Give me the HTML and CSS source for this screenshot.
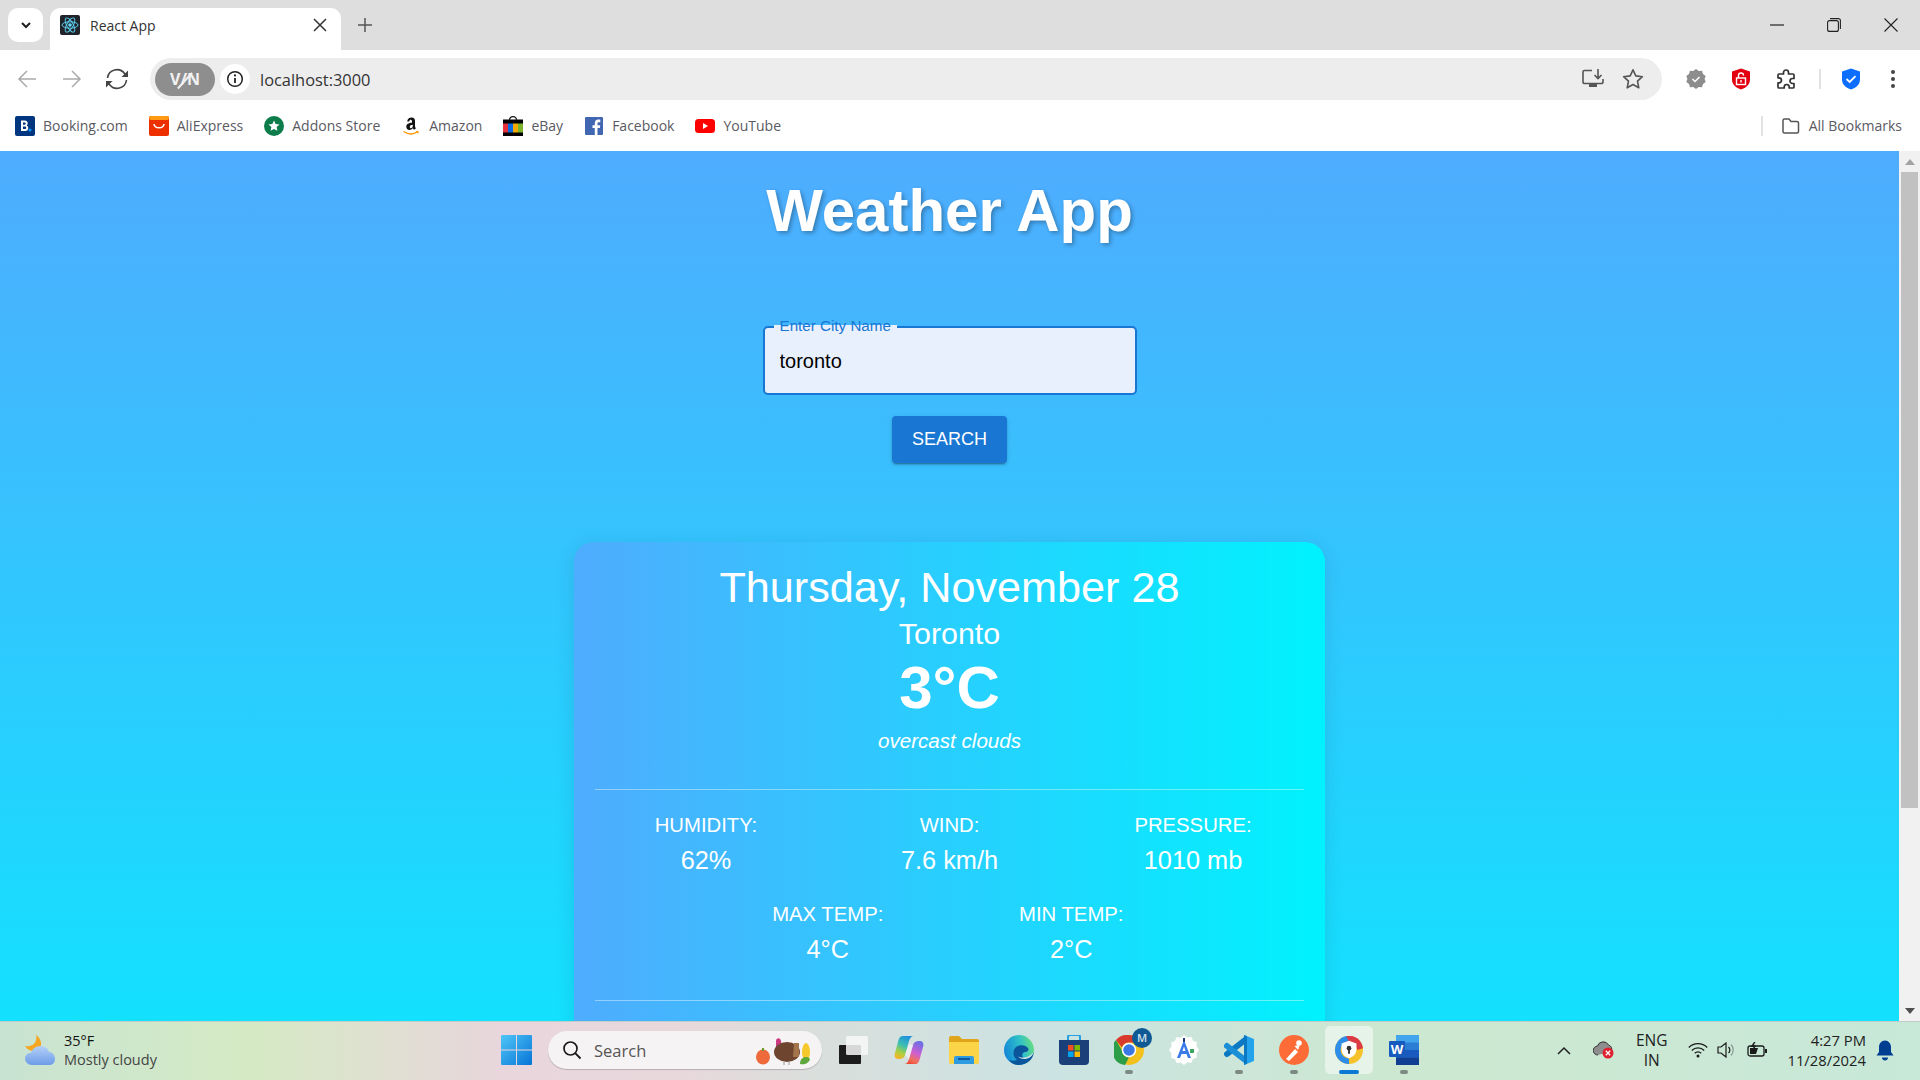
FILE: index.html
```html
<!DOCTYPE html>
<html lang="en">
<head>
  <meta charset="UTF-8">
  <title>React App</title>
  <link rel="stylesheet" href="styles.css">
</head>
<body>
  <!-- Tab strip -->
  <div class="tabstrip">
    <div class="tab-search">
      <svg width="14" height="14" viewBox="0 0 14 14"><path d="M3 5l4 4 4-4" fill="none" stroke="#1f1f1f" stroke-width="2"/></svg>
    </div>
    <div class="tab">
      <svg class="tab-icon" width="20" height="20" viewBox="0 0 20 20">
        <rect width="20" height="20" rx="2" fill="#20232a"/>
        <circle cx="10" cy="10" r="1.8" fill="#61dafb"/>
        <g fill="none" stroke="#61dafb" stroke-width="0.9">
          <ellipse cx="10" cy="10" rx="8" ry="3.2"/>
          <ellipse cx="10" cy="10" rx="8" ry="3.2" transform="rotate(60 10 10)"/>
          <ellipse cx="10" cy="10" rx="8" ry="3.2" transform="rotate(120 10 10)"/>
        </g>
      </svg>
      <span class="tab-title">React App</span>
      <svg width="14" height="14" viewBox="0 0 14 14"><path d="M1 1l12 12M13 1L1 13" stroke="#333" stroke-width="1.5"/></svg>
    </div>
    <div class="new-tab">
      <svg width="14" height="14" viewBox="0 0 14 14"><path d="M7 0v14M0 7h14" stroke="#555" stroke-width="1.5"/></svg>
    </div>
    <div class="window-controls">
      <svg width="14" height="14" viewBox="0 0 14 14"><path d="M0 7h14" stroke="#222" stroke-width="1.2"/></svg>
      <svg width="14" height="14" viewBox="0 0 14 14"><rect x="0.6" y="2.6" width="10.8" height="10.8" rx="2" fill="none" stroke="#222" stroke-width="1.1"/><path d="M3 .6h8.4a2 2 0 0 1 2 2V11" fill="none" stroke="#222" stroke-width="1.1"/></svg>
      <svg width="14" height="14" viewBox="0 0 14 14"><path d="M.5.5l13 13M13.5.5l-13 13" stroke="#222" stroke-width="1.1"/></svg>
    </div>
  </div>

  <!-- Toolbar -->
  <div class="toolbar">
    <div class="nav-buttons">
      <svg width="20" height="20" viewBox="0 0 20 20"><path d="M19 10H2M10 2l-8 8 8 8" fill="none" stroke="#aaa" stroke-width="1.5"/></svg>
      <svg width="20" height="20" viewBox="0 0 20 20"><path d="M1 10h17M10 2l8 8-8 8" fill="none" stroke="#aaa" stroke-width="1.5"/></svg>
      <svg class="reload" width="24" height="24" viewBox="0 0 24 24"><g fill="none" stroke="#444" stroke-width="1.6"><path d="M2.5 11a9.5 9.5 0 0 1 17-4.500L21.500 9"/><path d="M21.5 13a9.5 9.5 0 0 1-17 4.500L2.500 15"/></g><path d="M23 3.5V10h-6.500zM1 20.500V14h6.500z" fill="#444"/></svg>
    </div>
    <div class="omnibox">
      <div class="vpn-pill"><span class="vpn-text">V/N</span></div>
      <div class="site-info">
        <svg width="18" height="18" viewBox="0 0 18 18"><circle cx="9" cy="9" r="7.3" fill="none" stroke="#222" stroke-width="1.5"/><path d="M9 8v5" stroke="#222" stroke-width="1.8"/><circle cx="9" cy="5.4" r="1.1" fill="#222"/></svg>
      </div>
      <span class="url">localhost:3000</span>
      <div class="omnibox-actions">
        <svg width="22" height="22" viewBox="0 0 22 22"><g fill="none" stroke="#555" stroke-width="1.6"><path d="M10 2.5H2.500A1.500 1.500 0 0 0 1 4v10a1.500 1.500 0 0 0 1.500 1.500h17A1.500 1.500 0 0 0 21 14v-3"/><path d="M16 1v9M12.500 7l3.500 3.500L19.500 7"/></g><path d="M7 16h8v3H7z" fill="#555"/></svg>
        <svg width="22" height="22" viewBox="0 0 22 22"><path d="M11 1.800l2.800 6.100 6.600.8-4.900 4.500 1.300 6.600-5.800-3.300-5.800 3.300 1.300-6.600L1.600 8.700l6.600-.8z" fill="none" stroke="#555" stroke-width="1.6" stroke-linejoin="round"/></svg>
      </div>
    </div>
    <div class="extensions">
      <svg class="ext-a" width="22" height="22" viewBox="0 0 22 22"><path d="M11 1l2.700 1.900 3.300-.2 1 3.200 2.700 2-1.100 3.100 1.100 3.100-2.700 2-1 3.200-3.300-.2L11 21l-2.700-1.900-3.300.2-1-3.200-2.700-2L2.400 11 1.300 7.900l2.700-2 1-3.200 3.300.2z" fill="#8d8d8d"/><path d="M7.5 11l2.500 2.500 4.500-4.500" fill="none" stroke="#fff" stroke-width="1.5"/></svg>
      <svg class="ext-b" width="20" height="22" viewBox="0 0 20 22"><path d="M10 .5l9 3v8c0 5-4 8.500-9 10-5-1.500-9-5-9-10v-8z" fill="#e3000f"/><rect x="5.5" y="10" width="9" height="6.5" fill="none" stroke="#fff" stroke-width="1.4"/><path d="M7.5 10V7.500a2.500 2.500 0 0 1 5 0" fill="none" stroke="#fff" stroke-width="1.4"/><path d="M10 12v2.500" stroke="#fff" stroke-width="1.4"/></svg>
      <svg class="ext-c" width="22" height="22" viewBox="0 0 22 22"><path d="M8.5 4.500a2.500 2.500 0 0 1 5 0V6H18a1 1 0 0 1 1 1v3.500h-1.500a2.500 2.500 0 0 0 0 5H19V19a1 1 0 0 1-1 1h-3.800v-1a2.500 2.500 0 0 0-5 0v1H4a1 1 0 0 1-1-1v-4.200h1a2.500 2.500 0 0 0 0-5H3V7a1 1 0 0 1 1-1h4.500z" fill="none" stroke="#333" stroke-width="1.7" stroke-linejoin="round"/></svg>
      <div class="ext-sep"></div>
      <svg class="ext-d" width="20" height="22" viewBox="0 0 20 22"><path d="M10 .5l9 3v8c0 5-4 8.500-9 10-5-1.500-9-5-9-10v-8z" fill="#0d6efd"/><path d="M5.5 11l3.200 3 5.800-5.800" fill="none" stroke="#fff" stroke-width="1.8"/></svg>
      <svg class="ext-e" width="6" height="20" viewBox="0 0 6 20"><circle cx="3" cy="3" r="2" fill="#444"/><circle cx="3" cy="10" r="2" fill="#444"/><circle cx="3" cy="17" r="2" fill="#444"/></svg>
    </div>
  </div>

  <!-- Bookmarks -->
  <div class="bookmarks">
    <a class="bookmark">
      <svg width="20" height="20" viewBox="0 0 20 20"><rect width="20" height="20" rx="2" fill="#003580"/><path d="M6 4.500h4a2.800 2.800 0 0 1 1.800 4.900A3 3 0 0 1 10.500 15H6z" fill="#fff"/><path d="M8 6.500v2.200h1.700a1.100 1.100 0 0 0 0-2.200zM8 10.500V13h2a1.250 1.250 0 0 0 0-2.500z" fill="#003580"/><circle cx="15" cy="14" r="1.5" fill="#0896ff"/></svg>
      <span>Booking.com</span>
    </a>
    <a class="bookmark">
      <svg width="20" height="20" viewBox="0 0 20 20"><rect width="20" height="20" rx="2" fill="#ee2f00"/><rect width="20" height="4" rx="2" fill="#ff9a14"/><path d="M5 8c.5 5 9.500 5 10 0" fill="none" stroke="#fff" stroke-width="1.5"/></svg>
      <span>AliExpress</span>
    </a>
    <a class="bookmark">
      <svg width="20" height="20" viewBox="0 0 20 20"><circle cx="10" cy="10" r="10" fill="#0c7c4a"/><path d="M10 4.500l1.600 3.500 3.900.4-2.900 2.600.8 3.800L10 12.900l-3.400 1.900.8-3.800-2.900-2.600 3.900-.4z" fill="#fff"/></svg>
      <span>Addons Store</span>
    </a>
    <a class="bookmark">
      <svg width="20" height="20" viewBox="0 0 20 20"><path d="M6.200 5.500C6.500 3 8.200 1.500 10.500 1.500c2.500 0 3.500 1.500 3.500 3.500v5c0 1 .4 1.500 1 2.200l-1.900 1.600c-.6-.5-1-1-1.300-1.600-1 1.200-2 1.700-3.300 1.700-1.900 0-3.200-1.200-3.200-3.200 0-2.700 2.300-3.800 5.700-4V5.500c0-1-.4-1.800-1.300-1.800-.8 0-1.400.6-1.500 1.800zm5.600 3.300c-1.800 0-3 .7-3 2 0 .9.500 1.500 1.200 1.500 1.100 0 1.800-1.100 1.800-2.500z" fill="#111"/><path d="M2.500 15.500c4.500 3 10 3 14 .3" fill="none" stroke="#f90" stroke-width="1.3"/><path d="M14.500 15h3v3z" fill="#f90"/></svg>
      <span>Amazon</span>
    </a>
    <a class="bookmark">
      <svg width="20" height="20" viewBox="0 0 20 20"><rect y="3.5" width="20" height="16.5" fill="#000"/><path d="M6.500 4a3.500 3.500 0 0 1 7 0" fill="none" stroke="#222" stroke-width="1.3"/><rect y="7.5" width="5" height="9" fill="#e8303a"/><rect x="5" y="7.500" width="5" height="9" fill="#0a6ce0"/><rect x="10" y="7.500" width="5" height="9" fill="#f5a800"/><rect x="15" y="7.500" width="5" height="9" fill="#7bb62a"/></svg>
      <span>eBay</span>
    </a>
    <a class="bookmark">
      <svg width="20" height="20" viewBox="0 0 20 20"><rect x="1" y="1" width="18" height="18" rx="1" fill="#4267b2"/><path d="M13.500 19v-7h2.300l.4-2.800h-2.700V7.500c0-.8.300-1.300 1.400-1.300h1.400V3.700c-.3 0-1.100-.1-2-.1-2.100 0-3.500 1.300-3.500 3.600v2H8.500V12h2.300v7z" fill="#fff"/></svg>
      <span>Facebook</span>
    </a>
    <a class="bookmark">
      <svg width="20" height="20" viewBox="0 0 20 20"><rect y="3" width="20" height="14" rx="3.5" fill="#f00"/><path d="M8 7l5 3-5 3z" fill="#fff"/></svg>
      <span>YouTube</span>
    </a>
    <div class="all-bookmarks">
      <div class="bookmarks-sep"></div>
      <svg width="18" height="18" viewBox="0 0 18 18"><path d="M1 3.500A1.500 1.500 0 0 1 2.500 2H7l2 2.500h6A1.500 1.500 0 0 1 16.500 6v8.500A1.500 1.500 0 0 1 15 16H2.500A1.500 1.500 0 0 1 1 14.500z" fill="none" stroke="#555" stroke-width="1.5"/></svg>
      <span>All Bookmarks</span>
    </div>
  </div>

  <!-- Page -->
  <div class="page">
    <div class="viewport">
      <div class="app">
        <h1 class="app-title">Weather App</h1>
        <div class="city-field">
          <label class="city-label">Enter City Name</label>
          <input class="city-input" type="text" value="toronto">
        </div>
        <button class="search-btn">SEARCH</button>

        <div class="weather-card">
          <div class="date">Thursday, November 28</div>
          <div class="city">Toronto</div>
          <div class="temp">3°C</div>
          <div class="desc">overcast clouds</div>
          <hr class="card-rule rule-top">
          <div class="stats">
            <div class="stat"><div class="stat-label">HUMIDITY:</div><div class="stat-value">62%</div></div>
            <div class="stat"><div class="stat-label">WIND:</div><div class="stat-value">7.6 km/h</div></div>
            <div class="stat"><div class="stat-label">PRESSURE:</div><div class="stat-value">1010 mb</div></div>
            <div class="stat"><div class="stat-label">MAX TEMP:</div><div class="stat-value">4°C</div></div>
            <div class="stat"><div class="stat-label">MIN TEMP:</div><div class="stat-value">2°C</div></div>
          </div>
          <hr class="card-rule rule-bottom">
        </div>
      </div>
    </div>
    <div class="scrollbar">
      <div class="scroll-arrow"><svg width="12" height="8" viewBox="0 0 12 8"><path d="M6 1l5 6H1z" fill="#a3a3a3"/></svg></div>
      <div class="scroll-track"><div class="scroll-thumb"></div></div>
      <div class="scroll-arrow"><svg width="12" height="8" viewBox="0 0 12 8"><path d="M6 7L1 1h10z" fill="#505050"/></svg></div>
    </div>
  </div>

  <!-- Taskbar -->
  <div class="taskbar">
    <div class="tb-weather">
      <svg width="30" height="30" viewBox="0 0 30 30">
        <defs><linearGradient id="cloudg" x1="0" y1="0" x2="0" y2="1"><stop offset="0" stop-color="#b4d0f7"/><stop offset="1" stop-color="#6d9ce8"/></linearGradient></defs>
        <path d="M11 0c5 3 7 10 3 14-4 4-11 2-14-3 5 1 10-1 11-6 .5-2 .5-4 0-5z" fill="#f5a623"/>
        <path d="M7 30c-4 0-7-3-7-6.500S3 18 6 18c1-4 5-7 9-7s8 2 9 6c3.500 0 6 3 6 7s-3 6-6 6z" fill="url(#cloudg)"/>
      </svg>
      <div class="tb-weather-text">
        <div class="tb-temp">35°F</div>
        <div class="tb-cond">Mostly cloudy</div>
      </div>
    </div>
    <div class="task-item">
      <svg width="31" height="30" viewBox="0 0 31 30">
        <defs><linearGradient id="winblue" x1="0" y1="0" x2="1" y2="1"><stop offset="0" stop-color="#4fc6f8"/><stop offset="1" stop-color="#0774d6"/></linearGradient></defs>
        <path d="M1 0h14v14.500H0V1a1 1 0 0 1 1-1zM16 0h14a1 1 0 0 1 1 1v13.500H16zM0 15.500h15V30H1a1 1 0 0 1-1-1zM16 15.500h15V29a1 1 0 0 1-1 1H16z" fill="url(#winblue)"/>
      </svg>
    </div>
    <div class="tb-search">
      <svg width="20" height="20" viewBox="0 0 20 20"><circle cx="8.500" cy="8.500" r="6.500" fill="none" stroke="#1a1a1a" stroke-width="1.7"/><path d="M13.200 13.200l5.300 5.300" stroke="#1a1a1a" stroke-width="1.9"/></svg>
      <span class="tb-search-text">Search</span>
      <svg class="tb-search-art" width="58" height="30" viewBox="0 0 58 30">
        <ellipse cx="9" cy="22" rx="7" ry="7.5" fill="#ee6a3a"/><path d="M9 13v3" stroke="#6a9a30" stroke-width="2"/>
        <path d="M22 6c0-3 4-4 5 0l1 8h-6z" fill="#c93a80"/>
        <ellipse cx="33" cy="17" rx="13" ry="10" fill="#6e4630"/><path d="M40 8h5v14h-6z" fill="#a4744a"/>
        <path d="M30 27v3M35 27v3" stroke="#999" stroke-width="1"/>
        <ellipse cx="52" cy="17" rx="4" ry="9" fill="#f5c92b"/><path d="M46 29c0-5 3-7 6-7s4 2 4 2c-1 4-5 6-10 5z" fill="#5fa83c"/>
      </svg>
    </div>
    <div class="task-items">
      <div class="task-item">
        <svg width="29" height="28" viewBox="0 0 29 28"><rect y="9" width="22" height="19" rx="1" fill="#1c1c1c"/><rect x="7" width="22" height="19" rx="1.500" fill="#f8f8f8" opacity=".85"/></svg>
      </div>
      <div class="task-item">
        <svg width="30" height="28" viewBox="0 0 30 28">
          <defs>
            <linearGradient id="copa" x1="0.7" y1="0" x2="0.3" y2="1"><stop offset="0" stop-color="#1b8fe0"/><stop offset=".45" stop-color="#3fc0b0"/><stop offset=".75" stop-color="#a8d040"/><stop offset="1" stop-color="#f5b528"/></linearGradient>
            <linearGradient id="copb" x1="0.7" y1="0" x2="0.3" y2="1"><stop offset="0" stop-color="#6a6ee8"/><stop offset=".5" stop-color="#d060d0"/><stop offset=".8" stop-color="#f0705a"/><stop offset="1" stop-color="#f04830"/></linearGradient>
          </defs>
          <path d="M9 0h11c-3 0-4 2-5 5l-4 14c-1 3-3 4-6 4H4c-3 0-4-3-3-6L4 6c1-4 2-6 5-6z" fill="url(#copa)"/>
          <path d="M21 28H10c3 0 4-2 5-5l4-14c1-3 3-4 6-4h1c3 0 4 3 3 6l-3 11c-1 4-2 6-5 6z" fill="url(#copb)"/>
          <path d="M15 8l4 1-4 14-4-4z" fill="#f6f2f8" opacity=".75"/>
        </svg>
      </div>
      <div class="task-item">
        <svg width="30" height="28" viewBox="0 0 30 28"><path d="M0 2a2 2 0 0 1 2-2h8l3 3h15a2 2 0 0 1 2 2v4H0z" fill="#e0a51a"/><path d="M0 6h30v20a2 2 0 0 1-2 2H2a2 2 0 0 1-2-2z" fill="#fbd547"/><path d="M5 28v-6a2 2 0 0 1 2-2h16a2 2 0 0 1 2 2v6z" fill="#2e9be0"/><path d="M9 23h12" stroke="#0a5c9e" stroke-width="2"/></svg>
      </div>
      <div class="task-item">
        <svg width="30" height="30" viewBox="0 0 30 30">
          <defs><linearGradient id="edgeg" x1="0" y1="0.5" x2="1" y2="0.2"><stop offset="0" stop-color="#1488d8"/><stop offset=".55" stop-color="#2ec0c8"/><stop offset="1" stop-color="#6ee07a"/></linearGradient></defs>
          <circle cx="15" cy="15" r="15" fill="url(#edgeg)"/>
          <path d="M30 17c-1 8-8 13-15 13-5 0-8-2-10-5 3 1 5 1 8 0-4-3-5-9-1-13 4-3 10-2 12 1 1 2 0 4-3 4-2 0-4 3-2 5 3 3 7 2 11-5z" fill="#0b559c"/>
          <path d="M30 17c-2 5-6 7-10 7-3 0-5-1-6-3 2 2 7 2 11 0 2-1 4-3 5-4z" fill="#cfe3e4"/>
        </svg>
      </div>
      <div class="task-item">
        <svg width="30" height="30" viewBox="0 0 30 30"><path d="M9 5V2a2 2 0 0 1 2-2h8a2 2 0 0 1 2 2v3" fill="none" stroke="#26a0e0" stroke-width="2"/><path d="M0 5h30v21a4 4 0 0 1-4 4H4a4 4 0 0 1-4-4z" fill="#1b3f78"/><rect x="9" y="10" width="5.5" height="5.5" fill="#f25022"/><rect x="15.500" y="10" width="5.5" height="5.5" fill="#7fba00"/><rect x="9" y="16.500" width="5.5" height="5.5" fill="#00a4ef"/><rect x="15.500" y="16.500" width="5.5" height="5.5" fill="#ffb900"/></svg>
      </div>
      <div class="task-item running">
        <svg width="30" height="30" viewBox="0 0 30 30"><circle cx="15" cy="15" r="15" fill="#f3c11e"/><path d="M15 0a15 15 0 0 1 13 7.500H15a7.500 7.500 0 0 0-7 5L2 5A15 15 0 0 1 15 0z" fill="#d93a2e"/><path d="M2 5l6.500 11.500a7.500 7.500 0 0 0 6.500 6L11 30A15 15 0 0 1 2 5z" fill="#2c9e48"/><circle cx="15" cy="15" r="6.500" fill="#3b78e7" stroke="#fff" stroke-width="1.5"/></svg>
        <span class="profile-badge">M</span>
      </div>
      <div class="task-item">
        <svg width="30" height="30" viewBox="0 0 30 30"><path d="M15 0l3.500 2.500 4-.5 1.500 3.800 3.800 1.500-.3 4L30 15l-2.500 3.500.3 4-3.800 1.500-1.500 3.800-4-.5L15 30l-3.500-2.500-4 .5L6 24.200 2.200 22.700l.3-4L0 15l2.500-3.500-.3-4L6 6l1.500-3.800 4 .5z" fill="#fff"/><path d="M15 5L8 23h3l1.500-4h5l1.500 4h3z" fill="#3a7bea"/><path d="M13.500 16l1.500-4.500 1.500 4.500z" fill="#fff"/><path d="M15 3v4" stroke="#1a3a7a" stroke-width="2"/><path d="M21 14h4v4h-4z" fill="#38a860"/></svg>
      </div>
      <div class="task-item running">
        <svg width="30" height="30" viewBox="0 0 30 30"><g fill="none" stroke-width="6" stroke-linecap="round"><path d="M21 5L3 19" stroke="#0a78c2"/><path d="M3 11l18 14" stroke="#1a8ed6"/></g><path d="M20 0l10 4v22l-10 4z" fill="#24a3ec"/><path d="M20 0l3 1.200v27.600L20 30z" fill="#0a78c2"/></svg>
      </div>
      <div class="task-item running">
        <svg width="30" height="30" viewBox="0 0 30 30"><circle cx="15" cy="15" r="15" fill="#fd6c36"/><circle cx="20" cy="8" r="2.8" fill="#fff"/><path d="M7 24l9-10 3 3-9 9zM15.500 11l4-1 1 1-1.500 4z" fill="#fff"/></svg>
      </div>
      <div class="task-item active">
        <svg width="28" height="28" viewBox="0 0 30 30"><circle cx="15" cy="15" r="15" fill="#f6c22c"/><path d="M12 0a15 15 0 0 1 18 13l-6 2a9 9 0 0 0-12-7z" fill="#dc3a45"/><path d="M0 15A15 15 0 0 1 12 0l3 6a9 9 0 0 0 0 18v6A15 15 0 0 1 0 15z" fill="#2e8de8"/><path d="M15 5l8 3v6c0 5-3 8-8 10-5-2-8-5-8-10V8z" fill="#fff"/><circle cx="15" cy="13" r="2.5" fill="#333"/><path d="M14 14h2v5h-2z" fill="#333"/></svg>
      </div>
      <div class="task-item running">
        <svg width="30" height="30" viewBox="0 0 30 30"><rect x="7" width="23" height="30" rx="1.5" fill="#2b7cd3"/><rect x="7" width="23" height="7.5" fill="#41a5ee"/><rect x="7" y="15" width="23" height="7.5" fill="#185abd"/><rect x="7" y="22.500" width="23" height="7.5" fill="#103f91"/><rect y="6" width="16" height="16" rx="1" fill="#185abd"/></svg>
        <span class="word-w">W</span>
      </div>
    </div>
    <div class="tray">
      <svg class="tray-chevron" width="14" height="9" viewBox="0 0 14 9"><path d="M1 8l6-6 6 6" fill="none" stroke="#222" stroke-width="1.5"/></svg>
      <svg class="tray-cloud" width="22" height="18" viewBox="0 0 22 18"><path d="M5 14a4.500 4.500 0 0 1-.5-9 6 6 0 0 1 11-1 5 5 0 0 1 3 6" fill="#8e8e8e" stroke="#333" stroke-width="1"/><circle cx="15" cy="12" r="5.5" fill="#e02030"/><path d="M12.800 9.800l4.400 4.400M17.200 9.800l-4.400 4.400" stroke="#fff" stroke-width="1.3"/></svg>
      <div class="tray-lang">ENG<br>IN</div>
      <svg class="tray-wifi" width="20" height="16" viewBox="0 0 20 16"><g fill="none" stroke="#1a1a1a" stroke-width="1.3"><path d="M.8 5.500a13 13 0 0 1 18.400 0"/><path d="M3.800 8.500a8.800 8.800 0 0 1 12.400 0"/><path d="M6.800 11.300a4.500 4.500 0 0 1 6.400 0"/></g><circle cx="10" cy="14" r="1.5" fill="#1a1a1a"/></svg>
      <svg class="tray-vol" width="20" height="16" viewBox="0 0 20 16"><path d="M1 5h3l5-4v14l-5-4H1z" fill="none" stroke="#1a1a1a" stroke-width="1.2"/><path d="M11.500 5a4 4 0 0 1 0 6" fill="none" stroke="#1a1a1a" stroke-width="1.2"/><path d="M14 2.500a8 8 0 0 1 0 11" fill="none" stroke="#8a9a90" stroke-width="1.2"/></svg>
      <svg class="tray-batt" width="21" height="16" viewBox="0 0 21 16"><rect x="1" y="4" width="16" height="10" rx="2" fill="none" stroke="#1a1a1a" stroke-width="1.3"/><path d="M3 6h8l-2 6H3z" fill="#1a1a1a"/><rect x="18" y="7" width="2" height="4" fill="#1a1a1a"/><path d="M7 0L3.500 5h3L5 9l4.500-5.500h-3L8.500 0z" fill="#1a1a1a"/></svg>
      <div class="tray-clock">4:27 PM<br>11/28/2024</div>
      <svg class="tray-bell" width="18" height="21" viewBox="0 0 18 21"><path d="M9 .5c3.500 0 6 3 6 6.500v5l2.500 3.500H.5L3 12V7C3 3.500 5.500.5 9 .5z" fill="#003e92"/><path d="M6 17.500h6c0 2-1.300 3-3 3s-3-1-3-3z" fill="#003e92"/></svg>
    </div>
  </div>
</body>
</html>
```

FILE: styles.css
```css
* { box-sizing: border-box; }

html, body {
  margin: 0;
  height: 100%;
  overflow: hidden;
}
body {
  display: flex;
  flex-direction: column;
  font-family: "Open Sans", "Noto Sans", sans-serif;
  background: #fff;
}
svg { display: block; flex: none; }

/* ====== Tab strip ====== */
.tabstrip {
  height: 50px;
  flex: none;
  display: flex;
  background: #dedede;
  padding-top: 8px;
  padding-left: 8px;
}
.tab-search {
  width: 35px;
  height: 34px;
  background: #fff;
  border-radius: 10px;
  display: flex;
  align-items: center;
  justify-content: center;
}
.tab {
  width: 291px;
  height: 42px;
  margin-left: 7px;
  background: #fff;
  border-radius: 10px 10px 0 0;
  display: flex;
  align-items: center;
  padding: 0 14px 8px 10px;
}
.tab-icon { margin-right: 10px; }
.tab-title {
  flex: 1;
  font-size: 14px;
  color: #333;
}
.new-tab {
  width: 48px;
  height: 34px;
  display: flex;
  align-items: center;
  justify-content: center;
}
.window-controls {
  margin-left: auto;
  height: 34px;
  display: flex;
  align-items: center;
  gap: 43px;
  padding-right: 22px;
}

/* ====== Toolbar ====== */
.toolbar {
  height: 50px;
  flex: none;
  display: flex;
  align-items: flex-start;
  background: #fff;
  border-radius: 10px 10px 0 0;
  padding-top: 8px;
  padding-left: 17px;
}
.nav-buttons {
  height: 42px;
  display: flex;
  align-items: center;
  gap: 25px;
  width: 133px;
}
.reload { margin-left: -2px; }
.omnibox {
  width: 1512px;
  height: 42px;
  background: #eeedee;
  border-radius: 21px;
  display: flex;
  align-items: center;
  padding-left: 5px;
  padding-right: 18px;
}
.vpn-pill {
  position: relative;
  width: 60px;
  height: 33px;
  background: #8e8e8e;
  border-radius: 17px;
  display: flex;
  align-items: center;
  justify-content: center;
}
.vpn-text {
  color: #f2f2f2;
  font-weight: 700;
  font-size: 16px;
}
.vpn-pill::after {
  content: "";
  position: absolute;
  left: 29px;
  top: 7px;
  width: 1.5px;
  height: 21px;
  background: #f2f2f2;
  transform: rotate(42deg);
}
.site-info {
  width: 30px;
  height: 30px;
  margin-left: 5px;
  border-radius: 50%;
  background: #fff;
  display: flex;
  align-items: center;
  justify-content: center;
}
.url {
  margin-left: 10px;
  font-size: 16.4px;
  color: #333;
}
.omnibox-actions {
  margin-left: auto;
  display: flex;
  align-items: center;
  gap: 18px;
}
.extensions {
  height: 42px;
  display: flex;
  align-items: center;
  margin-left: 23px;
}
.ext-b { margin-left: 24px; }
.ext-c { margin-left: 24px; }
.ext-sep {
  width: 2px;
  height: 20px;
  background: #e2e2e2;
  margin: 0 20px 0 22px;
}
.ext-e { margin-left: 29px; }

/* ====== Bookmarks bar ====== */
.bookmarks {
  height: 51px;
  flex: none;
  display: flex;
  align-items: center;
  padding-left: 15px;
  gap: 21px;
  background: #fff;
}
.bookmark {
  display: flex;
  align-items: center;
  gap: 8px;
  font-size: 14px;
  color: #5a5a62;
}
.all-bookmarks {
  margin-left: auto;
  display: flex;
  align-items: center;
  font-size: 14px;
  color: #5a5a62;
  padding-right: 18px;
}
.all-bookmarks svg { margin: 0 9px 0 19px; }
.bookmarks-sep {
  width: 2px;
  height: 20px;
  background: #e2e2e2;
}

/* ====== Page ====== */
.page {
  flex: 1;
  min-height: 0;
  display: flex;
  overflow: hidden;
}
.viewport {
  flex: 1;
  overflow: hidden;
}
.app {
  height: 1150px;
  background: linear-gradient(#4facfe, #00f2fe);
  display: flex;
  flex-direction: column;
  align-items: center;
  font-family: "Liberation Sans", Arial, sans-serif;
  color: #fff;
  padding-top: 22px;
}
.app-title {
  margin: 0;
  font-size: 60px;
  font-weight: 700;
  line-height: 76px;
  text-shadow: 2px 2px 4px rgba(0, 0, 0, 0.3);
}
.city-field {
  position: relative;
  width: 374px;
  height: 69px;
  margin-top: 77px;
}
.city-label {
  position: absolute;
  top: -9px;
  left: 11px;
  padding: 0 6px;
  font-size: 15.2px;
  line-height: 17px;
  color: #1976d2;
  background: linear-gradient(transparent 50%, #e8f0fe 50%);
}
.city-input {
  width: 100%;
  height: 100%;
  padding: 2px 15px 0;
  border: 2px solid #1976d2;
  border-radius: 5px;
  background: #e8f0fe;
  font-family: inherit;
  font-size: 20px;
  color: #000;
  outline: none;
}
.search-btn {
  width: 115px;
  height: 47px;
  margin-top: 21px;
  border: none;
  border-radius: 4px;
  background: #1976d2;
  color: #fff;
  font-family: inherit;
  font-size: 18px;
  box-shadow: 0 3px 1px -2px rgba(0,0,0,0.2), 0 2px 2px 0 rgba(0,0,0,0.14), 0 1px 5px 0 rgba(0,0,0,0.12);
}

/* ====== Weather card ====== */
.weather-card {
  width: 751px;
  height: 720px;
  flex: none;
  margin-top: 79px;
  padding: 20px 21px;
  border-radius: 20px;
  background: linear-gradient(90deg, #4facfe, #00f2fe);
  box-shadow: 0 4px 20px rgba(0, 0, 0, 0.1);
  text-align: center;
}
.date { font-size: 43.2px; line-height: 50px; }
.city { font-size: 30.4px; line-height: 40px; margin-top: 1px; }
.temp { font-size: 60px; font-weight: 700; line-height: 68px; margin-top: 1px; }
.desc { font-size: 20.6px; font-style: italic; line-height: 30px; margin-top: 4px; }
.card-rule {
  border: none;
  height: 1px;
  background: rgba(255, 255, 255, 0.4);
  margin: 0;
}
.rule-top { margin-top: 33px; }
.rule-bottom { margin-top: 33px; }
.stats {
  display: flex;
  flex-wrap: wrap;
  justify-content: center;
  column-gap: 40px;
  row-gap: 22px;
  padding-top: 21px;
}
.stat { width: 203.5px; }
.stat-label { font-size: 20.3px; line-height: 29px; }
.stat-value { font-size: 25.3px; line-height: 35px; margin-top: 3px; }

/* ====== Scrollbar ====== */
.scrollbar {
  width: 21px;
  flex: none;
  background: #f1f1f1;
  display: flex;
  flex-direction: column;
}
.scroll-arrow {
  height: 21px;
  flex: none;
  display: flex;
  align-items: center;
  justify-content: center;
}
.scroll-track { flex: 1; padding: 0 2px; }
.scroll-thumb {
  height: 636px;
  background: #c1c1c1;
}

/* ====== Taskbar ====== */
.taskbar {
  height: 59px;
  flex: none;
  display: flex;
  align-items: center;
  padding-bottom: 2px;
  border-top: 1px solid #c2cdc8;
  background: linear-gradient(90deg, #c8e3d2 0, #d5eac4 250px, #e8d6dc 500px, #e8d8dc 680px, #d9dfdc 820px, #cbe3e2 1050px, #cde8d0 1400px, #c8e8d8 1920px);
}
.tb-weather {
  width: 489px;
  flex: none;
  display: flex;
  align-items: center;
  gap: 9px;
  padding-left: 25px;
}
.tb-weather-text { font-size: 14.5px; line-height: 19px; }
.tb-temp { color: #111; }
.tb-cond { color: #444; }
.task-item {
  position: relative;
  width: 55px;
  height: 48px;
  flex: none;
  display: flex;
  align-items: center;
  justify-content: center;
  border-radius: 5px;
}
.task-items { display: flex; margin-left: 4px; }
.running::after {
  content: "";
  position: absolute;
  left: 24px;
  bottom: 0;
  width: 8px;
  height: 4px;
  border-radius: 2px;
  background: #7c8a84;
}
.active {
  width: 48px;
  margin: 0 3.5px;
  background: rgba(255, 255, 255, 0.5);
}
.active::after {
  content: "";
  position: absolute;
  left: 14px;
  bottom: 0;
  width: 20px;
  height: 4px;
  border-radius: 2px;
  background: #0a78d4;
}
.profile-badge {
  position: absolute;
  top: 2px;
  right: 4px;
  width: 20px;
  height: 20px;
  border-radius: 50%;
  background: #0f5a94;
  color: #cfe0ee;
  font-size: 11px;
  font-weight: 600;
  line-height: 20px;
  text-align: center;
}
.word-w {
  position: absolute;
  left: 13px;
  top: 14px;
  width: 16px;
  text-align: center;
  color: #fff;
  font-size: 13px;
  font-weight: 700;
  line-height: 18px;
}
.tb-search {
  width: 274px;
  height: 38px;
  margin-left: 4px;
  flex: none;
  display: flex;
  align-items: center;
  padding: 0 10px 0 14px;
  border-radius: 19px;
  background: #f5f3f3;
  box-shadow: 0 1px 1px rgba(0, 0, 0, 0.2);
}
.tb-search-text {
  margin-left: 12px;
  font-size: 16.5px;
  color: #555;
}
.tb-search-art { margin-left: auto; }
.tray {
  margin-left: auto;
  display: flex;
  align-items: center;
  padding-right: 26px;
}
.tray-cloud { margin-left: 22px; }
.tray-lang {
  margin-left: 21px;
  font-size: 15.5px;
  line-height: 20px;
  text-align: center;
  color: #222;
}
.tray-wifi { margin-left: 21px; }
.tray-vol { margin-left: 9px; }
.tray-batt { margin-left: 10px; }
.tray-clock {
  margin-left: 19px;
  font-size: 14.8px;
  line-height: 20px;
  text-align: right;
  color: #222;
}
.tray-bell { margin-left: 10px; }
```
